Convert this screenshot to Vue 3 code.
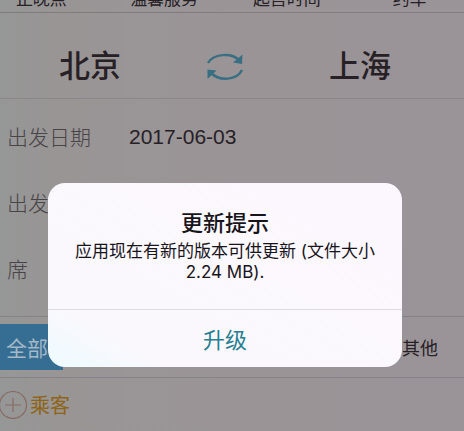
<script setup>
import { ref } from 'vue'

const services = ['正晚点', '温馨服务', '起售时间', '约车']
const cities = ref(['北京', '上海'])
const rows = [
  { label: '出发日期', value: '2017-06-03' },
  { label: '出发', value: '' },
  { label: '席', value: '' },
]
const swap = () => cities.value.reverse()
</script>

<template>
  <div class="screen">
    <main class="page">
      <nav class="services">
        <a v-for="s in services" :key="s" href="#">{{ s }}</a>
      </nav>

      <section class="route">
        <button class="city" type="button">{{ cities[0] }}</button>
        <button class="swap" type="button" aria-label="交换" @click="swap">
          <svg viewBox="0 0 38 30" width="38" height="30" fill="none">
            <path d="M2 11C7 2 25 0 33 8" stroke="currentColor" stroke-width="2.5" />
            <path d="M36.500 2.500L36 12L27 10.500Z" fill="currentColor" />
            <path d="M36 18C31 28 14 30 5 21" stroke="currentColor" stroke-width="2.5" />
            <path d="M1.500 27L1.500 17.500L10.500 18.500Z" fill="currentColor" />
          </svg>
        </button>
        <button class="city" type="button">{{ cities[1] }}</button>
      </section>

      <dl class="details">
        <div v-for="r in rows" :key="r.label" class="row">
          <dt>{{ r.label }}</dt>
          <dd>{{ r.value }}</dd>
        </div>
      </dl>

      <div class="filters">
        <button class="filter active" type="button">全部</button>
        <button class="filter other" type="button">其他</button>
      </div>

      <button class="passenger" type="button">
        <svg viewBox="0 0 28 28" width="28" height="28" fill="none" stroke="currentColor">
          <circle cx="13" cy="14" r="13.5" stroke-width="1.2" />
          <path d="M5 14H21M13 7V21" stroke-width="1.2" />
        </svg>
        <span>乘客</span>
      </button>
    </main>

    <div class="overlay">
      <div class="dialog" role="alertdialog" aria-labelledby="dlg-title" aria-describedby="dlg-text">
        <div class="body">
          <h2 id="dlg-title">更新提示</h2>
          <p id="dlg-text">应用现在有新的版本可供更新 (文件大小 2.24 MB).</p>
        </div>
        <button class="upgrade" type="button">升级</button>
      </div>
    </div>
  </div>
</template>

<style>
body {
  margin: 0;
  background: #9a9598;
}
</style>

<style scoped>
.screen {
  position: relative;
  min-height: 100vh;
  overflow: hidden;
  background: linear-gradient(90deg, #959796 0, #999595 56px, #9a9496 50%, #9a9499 100%);
  color: #272126;
  font-family: "Liberation Sans", "Noto Sans CJK SC", sans-serif;
}
button {
  margin: 0;
  padding: 0;
  border: 0;
  background: none;
  color: inherit;
  font: inherit;
}
.services {
  display: grid;
  grid-template-columns: repeat(4, 1fr);
  align-content: end;
  height: 12px;
  margin: 0 -7px 0 -20px;
  overflow: hidden;
  border-bottom: 1px solid #807b7f;
}
.services a {
  padding-bottom: 2px;
  color: inherit;
  font-size: 17px;
  line-height: 20px;
  text-align: center;
  text-decoration: none;
}
.route {
  display: flex;
  align-items: center;
  justify-content: space-between;
  padding: 34px 73px 11px 59px;
  border-bottom: 1px solid #8b868a;
}
.city {
  font-size: 31px;
  font-weight: 500;
  line-height: 40px;
}
.swap {
  display: flex;
  color: #386f82;
}
.details {
  margin: 0;
  padding: 5px 0 14px;
  border-bottom: 1px solid #878287;
}
.row {
  display: grid;
  grid-template-columns: 122px 1fr;
  align-items: center;
  height: 66px;
  padding-left: 7px;
}
dt {
  padding-bottom: 2px;
  color: #484447;
  font-size: 21px;
  font-weight: 300;
}
dd {
  margin: 0;
  font-size: 21px;
}
.filters {
  display: flex;
  align-items: center;
  justify-content: space-between;
  height: 60px;
  padding-right: 26px;
  border-bottom: 1px solid #878287;
}
.filter {
  font-size: 18px;
}
.active {
  width: 63px;
  height: 46px;
  padding-left: 6px;
  background: #356e92;
  color: #a5b8c8;
  font-size: 21px;
  text-align: left;
}
.passenger {
  display: flex;
  align-items: center;
  gap: 2px;
  height: 54px;
  color: #896b64;
}
.passenger span {
  padding-bottom: 2px;
  color: #8e6416;
  font-size: 20px;
}
.overlay {
  position: absolute;
  inset: 0;
  padding: 183px 62px 0 48px;
}
.dialog {
  overflow: hidden;
  border-radius: 17px;
  background: linear-gradient(30deg, #edfbff 0, #faf8fd 18%, #fcf7fe 100%);
  color: #17141a;
  text-align: center;
}
.body {
  padding: 24px 20px 26px;
  border-bottom: 1px solid #dfdce2;
}
h2 {
  margin: 0;
  font-size: 22px;
  font-weight: 500;
  line-height: 34px;
}
p {
  margin: 0;
  font-family: Inter, "Noto Sans CJK SC", sans-serif;
  font-size: 17px;
  line-height: 21px;
}
.upgrade {
  width: 100%;
  height: 57px;
  padding-bottom: 2px;
  color: #277f93;
  font-size: 22px;
}
</style>
